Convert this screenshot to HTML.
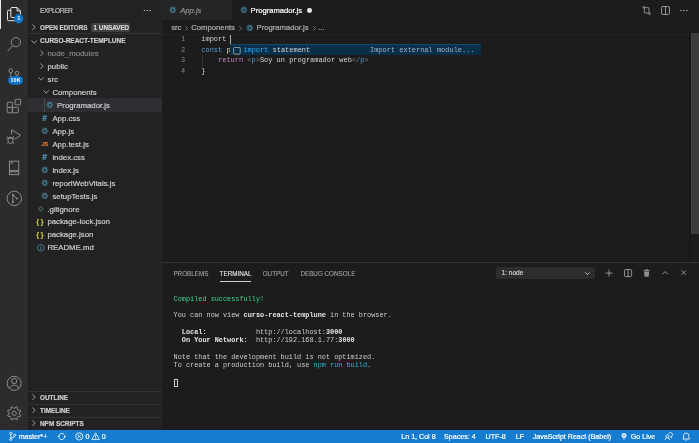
<!DOCTYPE html>
<html><head><meta charset="utf-8">
<style>
*{margin:0;padding:0;box-sizing:border-box}
html,body{width:699px;height:443px;overflow:hidden;background:#1c1c1c}
body{position:relative;will-change:transform;-webkit-text-stroke:0.2px currentColor;font-family:"Liberation Sans",sans-serif;color:#cccccc}
.a{position:absolute}
.t{position:absolute;white-space:pre;line-height:1}
svg{overflow:visible}
#act{left:0;top:0;width:28.3px;height:430.2px;background:#2c2c2c}
#side{left:28.3px;top:0;width:133.9px;height:430.2px;background:#222222}
#tabs{left:162.2px;top:0;width:536.8px;height:20.4px;background:#1c1c1c}
#status{left:0;top:430.2px;width:699px;height:12.8px;background:#157cd0}
.lbl{position:absolute;white-space:pre;font-size:7.8px;line-height:12.9px;color:#cccccc}
.hdr{position:absolute;white-space:pre;font-size:6.4px;font-weight:bold;line-height:12.9px;color:#cccccc}
.code{position:absolute;left:201.3px;white-space:pre;font-family:"Liberation Mono",monospace;font-size:6.97px;line-height:10.5px;color:#d4d4d4}
.ln{position:absolute;white-space:pre;font-family:"Liberation Mono",monospace;font-size:6.92px;line-height:10.5px;color:#858585}
.term{position:absolute;left:173.6px;white-space:pre;font-family:"Liberation Mono",monospace;font-size:6.86px;line-height:8.35px;color:#cccccc}
.ptab{position:absolute;white-space:pre;font-size:6.3px;line-height:1;color:#a0a0a0;-webkit-text-stroke:0.1px currentColor}
.sb{position:absolute;white-space:pre;font-size:7.1px;line-height:12.8px;color:#ffffff;top:431.3px}
.ic{position:absolute}
.code,.term,.ln{-webkit-text-stroke:0}
</style></head><body>

<!-- ============ ACTIVITY BAR ============ -->
<div class="a" id="act"></div>
<div class="a" style="left:0;top:0;width:1.3px;height:28.5px;background:#e8e8e8"></div>
<!-- activity icons -->
<svg class="ic" style="left:0;top:0" width="28" height="430" viewBox="0 0 28 430">
<g fill="none" stroke="#e8e8e8" stroke-width="1" stroke-linejoin="round">
<path d="M11.8 7.5h5.2l3.4 3.4V16.5a1 1 0 0 1-1 1h-7.6a1 1 0 0 1-1-1V8.5a1 1 0 0 1 1-1z"/>
<path d="M17 7.5v3.4h3.4"/>
<path d="M10.8 10.3H8.5a1 1 0 0 0-1 1v8.4a1 1 0 0 0 1 1h7.5a1 1 0 0 0 1-1v-2.2"/>
</g>
<g fill="none" stroke="#8d8d8d" stroke-width="1">
<circle cx="15.9" cy="42.2" r="4.6"/><path d="M12.6 45.5L7.6 51.2"/>
<circle cx="10.8" cy="70.7" r="1.9"/><circle cx="17" cy="73.1" r="1.9"/><path d="M10.8 72.6v5M17 75v2"/>
<rect x="7.2" y="102.2" width="5.2" height="5.2" rx="0.6"/><rect x="7.2" y="107.4" width="5.2" height="5.4" rx="0.6"/><rect x="12.4" y="107.4" width="5.9" height="5.4" rx="0.6"/><rect x="15.1" y="99.3" width="5.5" height="5.6" rx="0.7"/>
<path d="M11.6 129.8v4.5M11.6 129.8l9 5.4-5.6 4"/>
<ellipse cx="10.5" cy="140.3" rx="2.6" ry="3.2"/><path d="M6.7 138.2h7.6M7 136.3l1.3 1.3M14 136.3l-1.3 1.3M7 143.6l1.3-1.3M14 143.6l-1.3-1.3"/>
<rect x="9.5" y="161.2" width="9.2" height="13.4"/><path d="M9.5 170.6h9.2M9.5 171.8h9.2M10.8 162.6h1.4v1.4"/>
<circle cx="14.3" cy="198.4" r="7.2"/><path d="M12.9 194.8v7.4M12.9 194.8l3.9 3.7"/>
<circle cx="14.2" cy="383.3" r="7"/><circle cx="14.2" cy="381" r="2.6"/><path d="M9.4 388.4c1.2-2.2 2.8-3.2 4.8-3.2s3.6 1 4.8 3.2"/>
<path d="M19.24 414.10 L20.76 415.09 L20.11 416.67 L18.33 416.30 L17.20 417.43 L17.57 419.21 L15.99 419.86 L15.00 418.34 L13.40 418.34 L12.41 419.86 L10.83 419.21 L11.20 417.43 L10.07 416.30 L8.29 416.67 L7.64 415.09 L9.16 414.10 L9.16 412.50 L7.64 411.51 L8.29 409.93 L10.07 410.30 L11.20 409.17 L10.83 407.39 L12.41 406.74 L13.40 408.26 L15.00 408.26 L15.99 406.74 L17.57 407.39 L17.20 409.17 L18.33 410.30 L20.11 409.93 L20.76 411.51 L19.24 412.50Z" stroke-linejoin="round"/><circle cx="14.2" cy="413.3" r="2.1"/>
</g>
<g fill="#8d8d8d"><circle cx="12.9" cy="194.8" r="1.1"/><circle cx="12.9" cy="202.2" r="1.1"/><circle cx="16.8" cy="198.5" r="1.1"/></g>
<circle cx="18.7" cy="18.7" r="4.7" fill="#1072c5"/>
<rect x="8.1" y="75.9" width="14.9" height="8.8" rx="4.4" fill="#1072c5"/>
</svg>
<div class="t" style="left:14px;top:16.1px;width:9.4px;text-align:center;font-size:5.6px;font-weight:bold;color:#fff;-webkit-text-stroke:0">1</div>
<div class="t" style="left:8.1px;top:78.2px;width:14.9px;text-align:center;font-size:5.3px;font-weight:bold;color:#fff;-webkit-text-stroke:0;letter-spacing:0.15px">10K</div>

<!-- ============ SIDEBAR ============ -->
<div class="a" id="side"></div>
<div class="a" style="left:28.3px;top:0;width:2px;height:430.2px;background:#1f1f1f"></div>
<div class="a" style="left:161.2px;top:0;width:1px;height:430.2px;background:#252525"></div>
<div class="t" style="left:40px;top:8.0px;font-size:6.7px;letter-spacing:-0.5px;color:#bdbdbd">EXPLORER</div>
<div class="t" style="left:142.9px;top:6.6px;font-size:8px;color:#c5c5c5;letter-spacing:0.3px">···</div>
<!-- open editors -->
<svg class="ic" style="left:32.00px;top:24.30px" width="3.6" height="6.4" viewBox="0 0 3.6 6.4"><path d="M0.5 0.5 L3.1 3.2 L0.5 5.9" fill="none" stroke="#c5c5c5" stroke-width="0.75"/></svg>
<div class="hdr" style="left:40px;top:21.5px;font-size:6.3px">OPEN EDITORS</div>
<div class="a" style="left:91.3px;top:22.8px;width:38.7px;height:9.1px;border-radius:1.5px;background:#414141"></div>
<div class="t" style="left:93.6px;top:25.0px;font-size:6.3px;font-weight:bold;color:#d6d6d6">1 UNSAVED</div>
<div class="a" style="left:28.3px;top:33.2px;width:133.9px;height:0.6px;background:#333333"></div>
<!-- project header -->
<svg class="ic" style="left:30.80px;top:39.70px" width="6.4" height="3.6" viewBox="0 0 6.4 3.6"><path d="M0.5 0.5 L3.2 3.1 L5.9 0.5" fill="none" stroke="#c5c5c5" stroke-width="0.75"/></svg>
<div class="hdr" style="left:40px;top:35.3px;font-size:6.5px">CURSO-REACT-TEMPLUNE</div>
<svg class="ic" style="left:40.00px;top:50.05px" width="3.6" height="6.4" viewBox="0 0 3.6 6.4"><path d="M0.5 0.5 L3.1 3.2 L0.5 5.9" fill="none" stroke="#c5c5c5" stroke-width="0.75"/></svg>
<div class="lbl" style="left:47.5px;top:47.75px;color:#858585">node_modules</div>
<svg class="ic" style="left:40.00px;top:63.03px" width="3.6" height="6.4" viewBox="0 0 3.6 6.4"><path d="M0.5 0.5 L3.1 3.2 L0.5 5.9" fill="none" stroke="#c5c5c5" stroke-width="0.75"/></svg>
<div class="lbl" style="left:47.5px;top:60.73px">public</div>
<svg class="ic" style="left:38.00px;top:77.41px" width="6.4" height="3.6" viewBox="0 0 6.4 3.6"><path d="M0.5 0.5 L3.2 3.1 L5.9 0.5" fill="none" stroke="#c5c5c5" stroke-width="0.75"/></svg>
<div class="lbl" style="left:47.5px;top:73.71px">src</div>
<svg class="ic" style="left:42.80px;top:90.39px" width="6.4" height="3.6" viewBox="0 0 6.4 3.6"><path d="M0.5 0.5 L3.2 3.1 L5.9 0.5" fill="none" stroke="#c5c5c5" stroke-width="0.75"/></svg>
<div class="lbl" style="left:52.4px;top:86.69px">Components</div>
<div class="a" style="left:28.3px;top:97.77px;width:133.6px;height:13.9px;background:#2f2f33"></div>
<div class="a" style="left:44.3px;top:97.77px;width:0.6px;height:13.9px;background:#4a4a4a"></div>
<svg class="ic" style="left:45.80px;top:101.32px" width="7.6" height="7.6" viewBox="0 0 16 16"><g fill="none" stroke="#4b87a2" stroke-width="1.25"><ellipse cx="8" cy="8" rx="6.8" ry="2.8"/><ellipse cx="8" cy="8" rx="6.8" ry="2.8" transform="rotate(60 8 8)"/><ellipse cx="8" cy="8" rx="6.8" ry="2.8" transform="rotate(-60 8 8)"/></g><circle cx="8" cy="8" r="1.6" fill="#12202a"/></svg>
<div class="lbl" style="left:57.1px;top:99.67px">Programador.js</div>
<div class="t" style="left:42.2px;top:113.75px;font-size:8.4px;font-weight:bold;color:#519aba">#</div>
<div class="lbl" style="left:52.4px;top:112.65px">App.css</div>
<svg class="ic" style="left:41.20px;top:127.28px" width="7.6" height="7.6" viewBox="0 0 16 16"><g fill="none" stroke="#4b87a2" stroke-width="1.25"><ellipse cx="8" cy="8" rx="6.8" ry="2.8"/><ellipse cx="8" cy="8" rx="6.8" ry="2.8" transform="rotate(60 8 8)"/><ellipse cx="8" cy="8" rx="6.8" ry="2.8" transform="rotate(-60 8 8)"/></g><circle cx="8" cy="8" r="1.6" fill="#12202a"/></svg>
<div class="lbl" style="left:52.4px;top:125.63px">App.js</div>
<div class="t" style="left:41.5px;top:141.81px;font-size:5.2px;font-weight:bold;font-style:italic;color:#e37933">JS</div>
<div class="lbl" style="left:52.4px;top:138.61px">App.test.js</div>
<div class="t" style="left:42.2px;top:152.69px;font-size:8.4px;font-weight:bold;color:#519aba">#</div>
<div class="lbl" style="left:52.4px;top:151.59px">index.css</div>
<svg class="ic" style="left:41.20px;top:166.22px" width="7.6" height="7.6" viewBox="0 0 16 16"><g fill="none" stroke="#4b87a2" stroke-width="1.25"><ellipse cx="8" cy="8" rx="6.8" ry="2.8"/><ellipse cx="8" cy="8" rx="6.8" ry="2.8" transform="rotate(60 8 8)"/><ellipse cx="8" cy="8" rx="6.8" ry="2.8" transform="rotate(-60 8 8)"/></g><circle cx="8" cy="8" r="1.6" fill="#12202a"/></svg>
<div class="lbl" style="left:52.4px;top:164.57px">index.js</div>
<svg class="ic" style="left:41.20px;top:179.20px" width="7.6" height="7.6" viewBox="0 0 16 16"><g fill="none" stroke="#4b87a2" stroke-width="1.25"><ellipse cx="8" cy="8" rx="6.8" ry="2.8"/><ellipse cx="8" cy="8" rx="6.8" ry="2.8" transform="rotate(60 8 8)"/><ellipse cx="8" cy="8" rx="6.8" ry="2.8" transform="rotate(-60 8 8)"/></g><circle cx="8" cy="8" r="1.6" fill="#12202a"/></svg>
<div class="lbl" style="left:52.4px;top:177.55px">reportWebVitals.js</div>
<svg class="ic" style="left:41.20px;top:192.18px" width="7.6" height="7.6" viewBox="0 0 16 16"><g fill="none" stroke="#4b87a2" stroke-width="1.25"><ellipse cx="8" cy="8" rx="6.8" ry="2.8"/><ellipse cx="8" cy="8" rx="6.8" ry="2.8" transform="rotate(60 8 8)"/><ellipse cx="8" cy="8" rx="6.8" ry="2.8" transform="rotate(-60 8 8)"/></g><circle cx="8" cy="8" r="1.6" fill="#12202a"/></svg>
<div class="lbl" style="left:52.4px;top:190.53px">setupTests.js</div>
<svg class="ic" style="left:37.5px;top:206.11px" width="5.6" height="5.6" viewBox="0 0 10 10"><path d="M5 1 L9 5 L5 9 L1 5Z" fill="none" stroke="#3f565e" stroke-width="2.2"/></svg>
<div class="lbl" style="left:47.4px;top:203.51px">.gitignore</div>
<div class="t" style="left:36.3px;top:218.09px;font-size:7.2px;font-weight:bold;color:#c4c43f;letter-spacing:1.7px">{}</div>
<div class="lbl" style="left:47.4px;top:216.49px">package-lock.json</div>
<div class="t" style="left:36.3px;top:231.07px;font-size:7.2px;font-weight:bold;color:#c4c43f;letter-spacing:1.7px">{}</div>
<div class="lbl" style="left:47.4px;top:229.47px">package.json</div>
<svg class="ic" style="left:37.0px;top:244.05px" width="7.6" height="7.6" viewBox="0 0 14 14"><circle cx="7" cy="7" r="6" fill="none" stroke="#5aa0c0" stroke-width="1.2"/><rect x="6.3" y="6" width="1.4" height="4.5" fill="#5aa0c0"/><rect x="6.3" y="3.3" width="1.4" height="1.4" fill="#5aa0c0"/></svg>
<div class="lbl" style="left:47.4px;top:242.45px">README.md</div>
<!-- bottom sidebar sections -->
<div class="a" style="left:28.3px;top:391.10px;width:133.9px;height:0.6px;background:#333333"></div>
<div class="a" style="left:28.3px;top:404.00px;width:133.9px;height:0.6px;background:#333333"></div>
<div class="a" style="left:28.3px;top:416.80px;width:133.9px;height:0.6px;background:#333333"></div>
<svg class="ic" style="left:32.00px;top:394.40px" width="3.6" height="6.4" viewBox="0 0 3.6 6.4"><path d="M0.5 0.5 L3.1 3.2 L0.5 5.9" fill="none" stroke="#c5c5c5" stroke-width="0.75"/></svg>
<div class="hdr" style="left:40px;top:391.80px">OUTLINE</div>
<svg class="ic" style="left:32.00px;top:407.30px" width="3.6" height="6.4" viewBox="0 0 3.6 6.4"><path d="M0.5 0.5 L3.1 3.2 L0.5 5.9" fill="none" stroke="#c5c5c5" stroke-width="0.75"/></svg>
<div class="hdr" style="left:40px;top:404.70px">TIMELINE</div>
<svg class="ic" style="left:32.00px;top:420.10px" width="3.6" height="6.4" viewBox="0 0 3.6 6.4"><path d="M0.5 0.5 L3.1 3.2 L0.5 5.9" fill="none" stroke="#c5c5c5" stroke-width="0.75"/></svg>
<div class="hdr" style="left:40px;top:417.50px">NPM SCRIPTS</div>

<!-- ============ EDITOR TABS ============ -->
<div class="a" id="tabs"></div>
<div class="a" style="left:162.2px;top:0;width:69.8px;height:20.2px;background:#252525"></div>
<div class="a" style="left:232px;top:0;width:87px;height:20.4px;background:#1c1c1c"></div>
<svg class="ic" style="left:168.70px;top:6.40px" width="7.6" height="7.6" viewBox="0 0 16 16"><g fill="none" stroke="#4b87a2" stroke-width="1.25"><ellipse cx="8" cy="8" rx="6.8" ry="2.8"/><ellipse cx="8" cy="8" rx="6.8" ry="2.8" transform="rotate(60 8 8)"/><ellipse cx="8" cy="8" rx="6.8" ry="2.8" transform="rotate(-60 8 8)"/></g><circle cx="8" cy="8" r="1.6" fill="#12202a"/></svg>
<div class="t" style="left:180.3px;top:7px;font-size:7.6px;font-style:italic;color:#8f8f8f">App.js</div>
<svg class="ic" style="left:239.70px;top:6.40px" width="7.6" height="7.6" viewBox="0 0 16 16"><g fill="none" stroke="#4b87a2" stroke-width="1.25"><ellipse cx="8" cy="8" rx="6.8" ry="2.8"/><ellipse cx="8" cy="8" rx="6.8" ry="2.8" transform="rotate(60 8 8)"/><ellipse cx="8" cy="8" rx="6.8" ry="2.8" transform="rotate(-60 8 8)"/></g><circle cx="8" cy="8" r="1.6" fill="#12202a"/></svg>
<div class="t" style="left:250.6px;top:7px;font-size:7.6px;color:#ffffff">Programador.js</div>
<div class="a" style="left:307.1px;top:8.4px;width:4.8px;height:4.8px;border-radius:50%;background:#e8e8e8"></div>
<!-- editor actions -->
<svg class="ic" style="left:641.8px;top:5.9px" width="9.4" height="9" viewBox="0 0 16 16"><g fill="none" stroke="#c5c5c5" stroke-width="1.2"><circle cx="3" cy="2.5" r="1.6"/><circle cx="13" cy="13.5" r="1.6"/><path d="M4.5 3h6.5a1 1 0 0 1 1 1v7.8M11.5 12.5H4.8a1 1 0 0 1-1-1V4.2"/></g></svg>
<svg class="ic" style="left:661.1px;top:5.9px" width="9" height="9" viewBox="0 0 16 16"><g fill="none" stroke="#c5c5c5" stroke-width="1.3"><rect x="1" y="1" width="14" height="14" rx="2"/><path d="M8 1.5v13"/></g></svg>
<div class="t" style="left:679.6px;top:6.6px;font-size:8px;color:#c5c5c5;letter-spacing:0.3px">···</div>

<!-- breadcrumbs -->
<div class="t" style="left:171.2px;top:24.10px;font-size:7.7px;color:#b0b0b0">src</div>
<svg class="ic" style="left:185px;top:25.60px" width="3" height="5" viewBox="0 0 3 5"><path d="M0.5 0.4 L2.5 2.5 L0.5 4.6" fill="none" stroke="#a9a9a9" stroke-width="0.6"/></svg>
<div class="t" style="left:191.3px;top:24.10px;font-size:7.7px;color:#b0b0b0">Components</div>
<svg class="ic" style="left:238.7px;top:25.60px" width="3" height="5" viewBox="0 0 3 5"><path d="M0.5 0.4 L2.5 2.5 L0.5 4.6" fill="none" stroke="#a9a9a9" stroke-width="0.6"/></svg>
<svg class="ic" style="left:246.30px;top:23.50px" width="7.6" height="7.6" viewBox="0 0 16 16"><g fill="none" stroke="#4b87a2" stroke-width="1.25"><ellipse cx="8" cy="8" rx="6.8" ry="2.8"/><ellipse cx="8" cy="8" rx="6.8" ry="2.8" transform="rotate(60 8 8)"/><ellipse cx="8" cy="8" rx="6.8" ry="2.8" transform="rotate(-60 8 8)"/></g><circle cx="8" cy="8" r="1.6" fill="#12202a"/></svg>
<div class="t" style="left:256.5px;top:24.10px;font-size:7.7px;color:#b0b0b0">Programador.js</div>
<svg class="ic" style="left:313.2px;top:25.60px" width="3" height="5" viewBox="0 0 3 5"><path d="M0.5 0.4 L2.5 2.5 L0.5 4.6" fill="none" stroke="#a9a9a9" stroke-width="0.6"/></svg>
<div class="t" style="left:318.2px;top:24.10px;font-size:7.7px;color:#b0b0b0">...</div>

<!-- code -->
<div class="a" style="left:162.2px;top:34.00px;width:528px;height:0.7px;background:#232323"></div>
<div class="ln" style="left:181px;top:34.00px">1</div>
<div class="ln" style="left:181px;top:44.50px">2</div>
<div class="ln" style="left:181px;top:55.00px">3</div>
<div class="ln" style="left:181px;top:65.50px">4</div>
<div class="code" style="top:34.00px">import </div>
<div class="a" style="left:230px;top:35.20px;width:0.8px;height:8.5px;background:#aeafad"></div>
<div class="code" style="top:44.50px"><span style="color:#569cd6">const</span> <span style="color:#dcdcaa">p</span></div>
<div class="a" style="left:201.5px;top:55.00px;width:0.6px;height:10.5px;background:#353535"></div>
<div class="code" style="top:55.00px">    <span style="color:#c586c0">return</span> <span style="color:#808080">&lt;</span><span style="color:#569cd6">p</span><span style="color:#808080">&gt;</span>Soy un programador web<span style="color:#808080">&lt;/</span><span style="color:#569cd6">p</span><span style="color:#808080">&gt;</span></div>
<div class="code" style="top:65.50px">}</div>

<!-- suggest widget -->
<div class="a" style="left:230px;top:44.2px;width:251px;height:10.9px;background:#0a3049;border-top:0.6px solid #124a6e"></div>
<svg class="ic" style="left:233px;top:46.6px" width="7.8" height="7.6" viewBox="0 0 16 16"><rect x="1" y="1" width="14" height="14" rx="2" fill="none" stroke="#c5c5c5" stroke-width="1.4"/></svg>
<div class="code" style="left:243.3px;top:44.9px"><span style="color:#2aaaff">import</span> statement</div>
<div class="code" style="left:370px;top:44.9px;color:#a3b4c4">Import external module...</div>

<!-- scrollbar -->
<div class="a" style="left:689.4px;top:33.3px;width:1.2px;height:228.7px;background:#171717"></div>
<div class="a" style="left:690.6px;top:33.3px;width:8.4px;height:200.4px;background:#3b3b3b"></div>
<div class="a" style="left:690.6px;top:33.3px;width:1.6px;height:200.4px;background:#434343"></div>

<!-- ============ PANEL ============ -->
<div class="a" style="left:162.2px;top:262px;width:536.8px;height:0.7px;background:#333333"></div>
<div class="ptab" style="left:173.4px;top:271.1px">PROBLEMS</div>
<div class="ptab" style="left:219.6px;top:271.1px;color:#e7e7e7">TERMINAL</div>
<div class="a" style="left:219.5px;top:280.6px;width:31.6px;height:0.9px;background:#cfcfcf"></div>
<div class="ptab" style="left:262.7px;top:271.1px">OUTPUT</div>
<div class="ptab" style="left:300.4px;top:271.1px">DEBUG CONSOLE</div>

<div class="a" style="left:496px;top:267.1px;width:99px;height:11.5px;border-radius:2px;background:#2d2d2d"></div>
<div class="t" style="left:501.6px;top:270.3px;font-size:6.5px;color:#d0d0d0">1: node</div>
<svg class="ic" style="left:585.2px;top:271.6px" width="5" height="3.2" viewBox="0 0 10 6"><path d="M0.8 0.8 L5 5 L9.2 0.8" fill="none" stroke="#d0d0d0" stroke-width="1.8"/></svg>
<!-- panel actions -->
<svg class="ic" style="left:605.1px;top:268.9px" width="8.1" height="8.2" viewBox="0 0 16 16"><path d="M8 1v14M1 8h14" stroke="#c5c5c5" stroke-width="1.3"/></svg>
<svg class="ic" style="left:624px;top:268.9px" width="8.2" height="8.1" viewBox="0 0 16 16"><g fill="none" stroke="#c5c5c5" stroke-width="1.4"><rect x="1" y="1" width="14" height="14" rx="2"/><path d="M8 1.5v13"/></g></svg>
<svg class="ic" style="left:642.6px;top:268.6px" width="7.2" height="8.1" viewBox="0 0 14 16"><g fill="#8f8f8f"><rect x="4.5" y="0.5" width="5" height="1.6" rx="0.6"/><rect x="1" y="2.2" width="12" height="2"/><path d="M2 5h10l-0.8 10.5H2.8z"/></g></svg>
<svg class="ic" style="left:661.7px;top:271.2px" width="6.5" height="3.7" viewBox="0 0 12 7"><path d="M0.8 6.2 L6 1 L11.2 6.2" fill="none" stroke="#c5c5c5" stroke-width="1.3"/></svg>
<svg class="ic" style="left:681px;top:270.4px" width="5.5" height="5.2" viewBox="0 0 10 10"><path d="M1 1 L9 9 M9 1 L1 9" fill="none" stroke="#c5c5c5" stroke-width="1.4"/></svg>

<!-- terminal -->
<div class="term" style="top:294.50px;color:#3dd68c">Compiled successfully!</div>
<div class="term" style="top:311.20px">You can now view <b style="color:#e5e5e5">curso-react-templune</b> in the browser.</div>
<div class="term" style="top:327.90px">  <b style="color:#e5e5e5">Local:</b>            http://localhost:<b style="color:#e5e5e5">3000</b></div>
<div class="term" style="top:336.25px">  <b style="color:#e5e5e5">On Your Network:</b>  http://192.168.1.77:<b style="color:#e5e5e5">3000</b></div>
<div class="term" style="top:352.95px">Note that the development build is not optimized.</div>
<div class="term" style="top:361.30px">To create a production build, use <span style="color:#29b8db">npm run build</span>.</div>
<div class="a" style="left:173.8px;top:378.6px;width:4.1px;height:8px;border:0.8px solid #cccccc"></div>

<!-- ============ STATUS BAR ============ -->
<div class="a" id="status"></div>
<svg class="ic" style="left:0;top:0" width="699" height="443" viewBox="0 0 699 443">
<g fill="none" stroke="#ffffff" stroke-width="0.8">
<circle cx="10.8" cy="433.3" r="1.1"/><circle cx="10.8" cy="439.3" r="1.1"/><circle cx="14.6" cy="435.3" r="1.1"/><path d="M10.8 434.4v3.8M14.6 436.4c0 1.6-3.8 1.2-3.8 2"/>
<path d="M58.8 436.8a3.1 3.1 0 0 1 5.6-2.1M64.8 436.2a3.1 3.1 0 0 1-5.6 2.1"/></g><g fill="#fff"><path d="M57.6 436.2h2.4l-1.2 1.6z"/><path d="M63.6 436.8h2.4l-1.2-1.6z"/></g><g fill="none" stroke="#ffffff" stroke-width="0.8">
<circle cx="79.3" cy="436.4" r="3.6"/><path d="M77.6 434.7l3.4 3.4M81 434.7l-3.4 3.4"/>
<path d="M95.6 432.9L99.4 439.6H91.8z"/><path d="M95.6 435.2v2.4M95.6 438.3v0.7"/>
<path d="M668.6 433.6a2.2 1.9 0 1 1 2.6 2.8l0.6 1.1-1.6-0.6"/><circle cx="667.4" cy="436.2" r="1.5"/><path d="M665 440c0.3-1.6 1.1-2.3 2.4-2.3s2.1 0.7 2.4 2.3"/><path d="M686.2 433a2.6 2.6 0 0 1 2.6 2.6v2.3l0.8 1.1h-6.8l0.8-1.1v-2.3a2.6 2.6 0 0 1 2.6-2.6z"/><path d="M685.3 439.8a1 1 0 0 0 1.8 0"/>
</g>
<circle cx="624" cy="435.6" r="2.5" fill="#d8e8f6"/><path d="M624 436v3.8" stroke="#d8e8f6" stroke-width="0.9"/><circle cx="624" cy="435.6" r="0.7" fill="#157cd0"/>
</svg>
<div class="sb" style="left:18.7px">master*+</div>
<div class="sb" style="left:85.6px">0</div>
<div class="sb" style="left:101.8px">0</div>
<div class="sb" style="left:401.3px">Ln 1, Col 8</div>
<div class="sb" style="left:444.1px">Spaces: 4</div>
<div class="sb" style="left:485.6px">UTF-8</div>
<div class="sb" style="left:515.8px">LF</div>
<div class="sb" style="left:532.7px">JavaScript React (Babel)</div>
<div class="sb" style="left:630.8px">Go Live</div>

</body></html>
